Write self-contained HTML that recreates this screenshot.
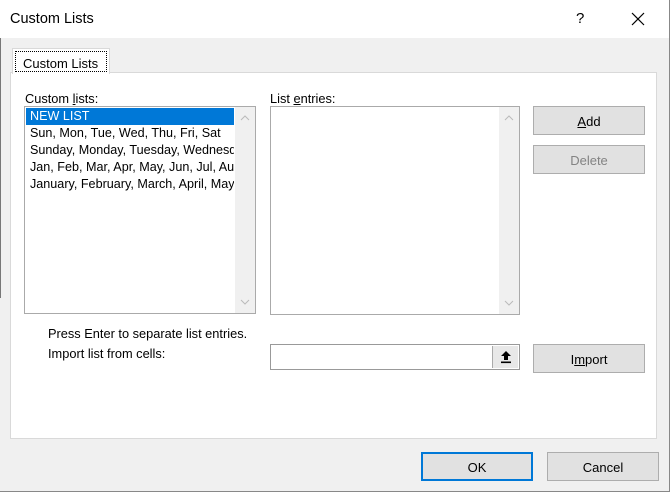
<!DOCTYPE html>
<html><head><style>
*{margin:0;padding:0;box-sizing:border-box}
body{width:670px;height:492px;background:#f0f0f0;font-family:"Liberation Sans",sans-serif;font-size:12.8px;color:#000;position:relative;overflow:hidden;border-right:1px solid #888;border-bottom:1px solid #888}
.a{position:absolute}
.btn{position:absolute;background:#e1e1e1;border:1px solid #adadad;text-align:center;line-height:29px;font-size:13px}
.list{position:absolute;background:#fff;border:1px solid #aaa}
.sb{position:absolute;right:0;top:0;bottom:0;width:20px;background:#f0f0f0}
u{text-decoration:underline}
</style></head><body>
<div class="a" style="left:0;top:0;width:669px;height:38px;background:#fff"></div>
<div class="a" style="left:10px;top:11px;font-size:14.5px">Custom Lists</div>
<div class="a" style="left:576px;top:10px;font-size:15px">?</div>
<svg class="a" style="left:631px;top:12px" width="14" height="14"><path d="M1 1L13 13M13 1L1 13" stroke="#000" stroke-width="1.2"/></svg>
<div class="a" style="left:0;top:38px;width:1px;height:260px;background:#777"></div>
<div class="a" style="left:10px;top:72px;width:647px;height:367px;background:#fff;border:1px solid #d9d9d9"></div>
<div class="a" style="left:12px;top:48px;width:98px;height:26px;background:#fff;border:1px solid #d9d9d9;border-bottom:none"></div>
<div class="a" style="left:15px;top:51px;width:92px;height:21px;border:1px dotted #000;padding:4px 0 0 7px;font-size:13px">Custom Lists</div>
<div class="a" style="left:25px;top:91px">Custom <u>l</u>ists:</div>
<div class="list" style="left:24px;top:106px;width:232px;height:208px">
<div class="sb"><svg style="position:absolute;left:5px;top:8px" width="10" height="6"><path d="M1 5L5 1L9 5" stroke="#bbb" fill="none"/></svg><svg style="position:absolute;left:5px;bottom:8px" width="10" height="6"><path d="M1 1L5 5L9 1" stroke="#bbb" fill="none"/></svg></div>
<div style="position:absolute;left:1px;top:1px;width:208px;line-height:17px;font-size:12.6px;white-space:nowrap;overflow:hidden">
<div style="background:#0078d7;color:#fff;padding-left:4px">NEW LIST</div>
<div style="padding-left:4px">Sun, Mon, Tue, Wed, Thu, Fri, Sat</div>
<div style="padding-left:4px">Sunday, Monday, Tuesday, Wednesday</div>
<div style="padding-left:4px">Jan, Feb, Mar, Apr, May, Jun, Jul, Aug</div>
<div style="padding-left:4px">January, February, March, April, May</div>
</div></div>
<div class="a" style="left:270px;top:91px">List <u>e</u>ntries:</div>
<div class="list" style="left:270px;top:106px;width:250px;height:209px">
<div class="sb"><svg style="position:absolute;left:5px;top:8px" width="10" height="6"><path d="M1 5L5 1L9 5" stroke="#bbb" fill="none"/></svg><svg style="position:absolute;left:5px;bottom:8px" width="10" height="6"><path d="M1 1L5 5L9 1" stroke="#bbb" fill="none"/></svg></div></div>
<div class="btn" style="left:533px;top:106px;width:112px;height:29px"><u>A</u>dd</div>
<div class="btn" style="left:533px;top:145px;width:112px;height:29px;color:#838383">Delete</div>
<div class="a" style="left:48px;top:326px">Press Enter to separate list entries.</div>
<div class="a" style="left:48px;top:346px">Import list from cells:</div>
<div class="list" style="left:270px;top:344px;width:250px;height:26px;border-color:#999">
<div style="position:absolute;right:1px;top:1px;width:26px;height:22px;background:#e8e8e8;border-left:1px solid #aaa"><svg style="position:absolute;left:7px;top:4px" width="12" height="14"><path d="M6 1L1 6H4V10H8V6H11Z" fill="#000"/><rect x="1" y="11.5" width="10" height="1.6" fill="#000"/></svg></div></div>
<div class="btn" style="left:533px;top:344px;width:112px;height:29px">I<u>m</u>port</div>
<div class="btn" style="left:421px;top:452px;width:112px;height:29px;border:2px solid #0078d7;line-height:27px">OK</div>
<div class="btn" style="left:547px;top:452px;width:112px;height:29px">Cancel</div>
</body></html>
